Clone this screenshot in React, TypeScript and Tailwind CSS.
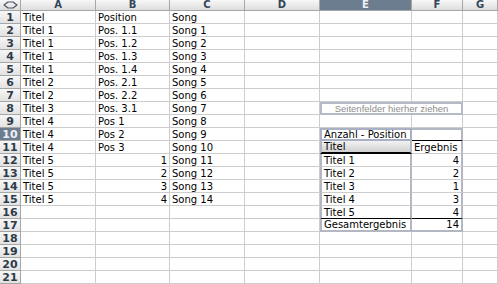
import React from "react";

const cols = ["A", "B", "C", "D", "E", "F", "G"];

type Row = (string | number | null)[];

// A..G per row, rows 1..21
const data: Row[] = [
  ["Titel", "Position", "Song", null, null, null, null],
  ["Titel 1", "Pos. 1.1", "Song 1", null, null, null, null],
  ["Titel 1", "Pos. 1.2", "Song 2", null, null, null, null],
  ["Titel 1", "Pos. 1.3", "Song 3", null, null, null, null],
  ["Titel 1", "Pos. 1.4", "Song 4", null, null, null, null],
  ["Titel 2", "Pos. 2.1", "Song 5", null, null, null, null],
  ["Titel 2", "Pos. 2.2", "Song 6", null, null, null, null],
  ["Titel 3", "Pos. 3.1", "Song 7", null, null, null, null],
  ["Titel 4", "Pos 1", "Song 8", null, null, null, null],
  ["Titel 4", "Pos 2", "Song 9", null, "Anzahl - Position", null, null],
  ["Titel 4", "Pos 3", "Song 10", null, "Titel", "Ergebnis", null],
  ["Titel 5", 1, "Song 11", null, "Titel 1", 4, null],
  ["Titel 5", 2, "Song 12", null, "Titel 2", 2, null],
  ["Titel 5", 3, "Song 13", null, "Titel 3", 1, null],
  ["Titel 5", 4, "Song 14", null, "Titel 4", 3, null],
  [null, null, null, null, "Titel 5", 4, null],
  [null, null, null, null, "Gesamtergebnis", 14, null],
  [null, null, null, null, null, null, null],
  [null, null, null, null, null, null, null],
  [null, null, null, null, null, null, null],
  [null, null, null, null, null, null, null],
];

const plain = "border-r border-b border-[#cdcdcd]";
const pg = "border-[#b3b7c2]";

// pivot table cell borders
const pivot: Record<string, string> = {
  E10: `border-2 border-[#a9b0c6]`,
  F10: `border-t-2 border-r-2 border-b border-l-0 ${pg} border-b-black`,
  E11: `border-l-2 border-r-2 border-b-2 ${pg} border-b-black bg-gradient-to-b from-[#f2f2f2] via-[#e2e2e2] to-[#cfcfcf]`,
  F11: `border-r-2 border-b ${pg} border-b-[#cdcdcd]`,
  E12: `border-l-2 border-r-2 border-b ${pg} border-b-[#cdcdcd]`,
  F12: `border-r-2 border-b ${pg} border-b-[#cdcdcd]`,
  E13: `border-l-2 border-r-2 border-b ${pg} border-b-[#cdcdcd]`,
  F13: `border-r-2 border-b ${pg} border-b-[#cdcdcd]`,
  E14: `border-l-2 border-r-2 border-b ${pg} border-b-[#cdcdcd]`,
  F14: `border-r-2 border-b ${pg} border-b-[#cdcdcd]`,
  E15: `border-l-2 border-r-2 border-b ${pg} border-b-[#cdcdcd]`,
  F15: `border-r-2 border-b ${pg} border-b-[#cdcdcd]`,
  E16: `border-l-2 border-r-2 border-b ${pg} border-b-black`,
  F16: `border-r-2 border-b ${pg} border-b-black`,
  E17: `border-l-2 border-r-2 border-b-2 ${pg}`,
  F17: `border-r-2 border-b-2 ${pg}`,
};

const Corner = () => (
  <div className="flex items-center justify-center border-r border-b border-[#a6a6a6] bg-gradient-to-b from-[#f7f7f7] to-[#dedede]">
    <svg width="15" height="8" viewBox="0 0 15 8" fill="none">
      <path d="M1 4 L5 1 L10 1 L14 4 L10 7 L5 7 Z" stroke="#4a5566" strokeWidth="1.2" strokeLinejoin="round" />
    </svg>
  </div>
);

const Cell = ({ v, cls }: { v: string | number | null; cls: string }) => (
  <div
    className={`${cls} px-[2px] text-[10px] leading-[11px] whitespace-nowrap flex items-center ${
      typeof v === "number" ? "justify-end" : "justify-start"
    }`}
  >
    {v}
  </div>
);

export default function App() {
  return (
    <div
      className="w-[498px] h-[284px] overflow-hidden bg-white text-black"
      style={{ fontFamily: '"DejaVu Sans", Verdana, sans-serif' }}
    >
      <div className="grid grid-cols-[21px_75px_74px_75px_75px_92px_51px_1fr] grid-rows-[11px_repeat(21,13px)]">
        <Corner />
        {cols.map((c) => (
          <div
            key={c}
            className={`flex items-center justify-center border-r border-b border-[#a6a6a6] text-[10px] font-bold leading-none ${
              c === "E"
                ? "bg-[#6c7d8f] text-[#eef1f4]"
                : "bg-gradient-to-b from-[#f7f7f7] to-[#dedede] text-[#34465a]"
            }`}
          >
            {c}
          </div>
        ))}

        {data.map((row, ri) => {
          const n = ri + 1;
          return (
            <React.Fragment key={n}>
              <div
                className={`flex items-center justify-center border-r border-b border-[#a6a6a6] text-[11px] font-bold leading-none ${
                  n === 10
                    ? "bg-[#6c7d8f] text-[#eef1f4]"
                    : "bg-gradient-to-b from-[#f7f7f7] to-[#e2e2e2] text-[#2e3b4b]"
                }`}
              >
                {n}
              </div>
              {n === 8 ? (
                <>
                  {row.slice(0, 4).map((v, ci) => (
                    <Cell key={ci} v={v} cls={plain} />
                  ))}
                  <div
                    className="col-span-2 flex items-center justify-center border-2 border-[#b6bac6] text-[9.5px] leading-none text-[#8d8d8d] whitespace-nowrap"
                    style={{ fontFamily: '"Liberation Sans", Arial, sans-serif' }}
                  >
                    Seitenfelder hierher ziehen
                  </div>
                  <div className={plain} />
                </>
              ) : (
                row.map((v, ci) => {
                  const key = `${cols[ci]}${n}`;
                  return <Cell key={key} v={v} cls={pivot[key] ?? plain} />;
                })
              )}
            </React.Fragment>
          );
        })}
      </div>
    </div>
  );
}
